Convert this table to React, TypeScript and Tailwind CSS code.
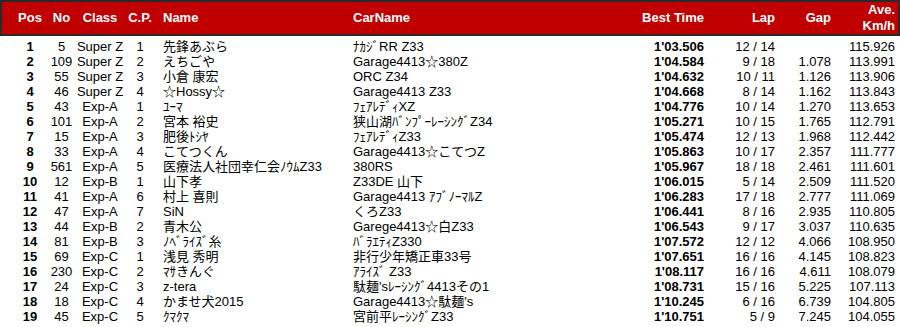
const rows = [
  ['1', '5', 'Super Z', '1', '先鋒あぶら', 'ﾅｶｼﾞRR Z33', "1'03.506", '12 / 14', '', '115.926'],
  ['2', '109', 'Super Z', '2', 'えちごや', 'Garage4413☆380Z', "1'04.584", '9 / 18', '1.078', '113.991'],
  ['3', '55', 'Super Z', '3', '小倉 康宏', 'ORC Z34', "1'04.632", '10 / 11', '1.126', '113.906'],
  ['4', '46', 'Super Z', '4', '☆Hossy☆', 'Garage4413 Z33', "1'04.668", '8 / 14', '1.162', '113.843'],
  ['5', '43', 'Exp-A', '1', 'ﾕｰﾏ', 'ﾌｪｱﾚﾃﾞｨXZ', "1'04.776", '10 / 14', '1.270', '113.653'],
  ['6', '101', 'Exp-A', '2', '宮本 裕史', '狭山湖ﾊﾞﾝﾌﾟｰﾚｰｼﾝｸﾞZ34', "1'05.271", '10 / 15', '1.765', '112.791'],
  ['7', '15', 'Exp-A', '3', '肥後ﾄｼﾔ', 'ﾌｪｱﾚﾃﾞｨZ33', "1'05.474", '12 / 13', '1.968', '112.442'],
  ['8', '33', 'Exp-A', '4', 'こてつくん', 'Garage4413☆こてつZ', "1'05.863", '10 / 17', '2.357', '111.777'],
  ['9', '561', 'Exp-A', '5', '医療法人社団幸仁会ﾉｳﾑZ33', '380RS', "1'05.967", '18 / 18', '2.461', '111.601'],
  ['10', '12', 'Exp-B', '1', '山下孝', 'Z33DE 山下', "1'06.015", '5 / 14', '2.509', '111.520'],
  ['11', '41', 'Exp-A', '6', '村上 喜則', 'Garage4413 ｱﾌﾞﾉｰﾏﾙZ', "1'06.283", '17 / 18', '2.777', '111.069'],
  ['12', '47', 'Exp-A', '7', 'SiN', 'くろZ33', "1'06.441", '8 / 16', '2.935', '110.805'],
  ['13', '44', 'Exp-B', '2', '青木公', 'Garege4413☆白Z33', "1'06.543", '9 / 17', '3.037', '110.635'],
  ['14', '81', 'Exp-B', '3', 'ﾉﾍﾞﾗｲｽﾞ糸', 'ﾊﾞﾗｴﾃｨZ330', "1'07.572", '12 / 12', '4.066', '108.950'],
  ['15', '69', 'Exp-C', '1', '浅見 秀明', '非行少年矯正車33号', "1'07.651", '16 / 16', '4.145', '108.823'],
  ['16', '230', 'Exp-C', '2', 'ﾏｻきんぐ', 'ｱﾗｲｽﾞ Z33', "1'08.117", '16 / 16', '4.611', '108.079'],
  ['17', '24', 'Exp-C', '3', 'z-tera', "駄麺'sﾚｰｼﾝｸﾞ4413その1", "1'08.731", '15 / 16', '5.225', '107.113'],
  ['18', '18', 'Exp-C', '4', 'かませ犬2015', "Garage4413☆駄麺's", "1'10.245", '6 / 16', '6.739', '104.805'],
  ['19', '45', 'Exp-C', '5', 'ｸﾏｸﾏ', '宮前平ﾚｰｼﾝｸﾞZ33', "1'10.751", '5 / 9', '7.245', '104.055'],
];

// Pos | No | Class | C.P. | Name | CarName | Best Time | Lap | Gap | Ave.
const cols = 'grid grid-cols-[36px_27px_50px_30px_198px_267px_84px_71px_56px_64px]';

export default function App() {
  return (
    <div
      className="w-[900px] h-[327px] bg-white text-black text-[13px] overflow-hidden"
      style={{ fontFamily: '"Liberation Sans", Arial, "Noto Sans CJK JP", sans-serif' }}
    >
      {/* Header */}
      <div className={`${cols} h-[36px] items-center bg-[#c00000] border-2 border-[#2a2a2a] pl-[10px] font-bold text-white leading-4`}>
        <div className="text-center">Pos</div>
        <div className="text-center">No</div>
        <div className="text-center">Class</div>
        <div className="text-center">C.P.</div>
        <div className="pl-2">Name</div>
        <div>CarName</div>
        <div className="text-right">Best Time</div>
        <div className="text-right">Lap</div>
        <div className="text-right">Gap</div>
        <div className="text-right">
          Ave.
          <br />
          Km/h
        </div>
      </div>

      {/* Rows */}
      <div className="pt-[3px]">
        {rows.map((r) => (
          <div key={r[0]} className={`${cols} h-[15px] items-center pl-3 leading-[15px] whitespace-nowrap`}>
            <div className="text-center font-bold">{r[0]}</div>
            <div className="text-center">{r[1]}</div>
            <div className="text-center">{r[2]}</div>
            <div className="text-center">{r[3]}</div>
            <div className="pl-2">{r[4]}</div>
            <div>{r[5]}</div>
            <div className="text-right font-bold">{r[6]}</div>
            <div className="text-right">{r[7]}</div>
            <div className="text-right">{r[8]}</div>
            <div className="text-right">{r[9]}</div>
          </div>
        ))}
      </div>
    </div>
  );
}
